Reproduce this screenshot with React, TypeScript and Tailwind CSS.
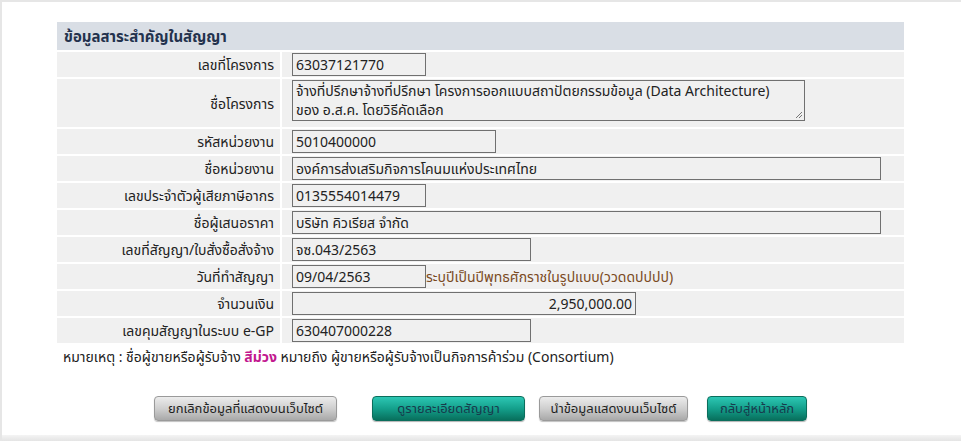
import React from 'react';

type Row = {
  label: string;
  value: React.ReactNode;
  w: string;
  tall?: boolean;
  right?: boolean;
  hint?: string;
};

const rows: Row[] = [
  { label: 'เลขที่โครงการ', value: '63037121770', w: 'w-[134px]' },
  {
    label: 'ชื่อโครงการ',
    value: (
      <>
        จ้างที่ปรึกษาจ้างที่ปรึกษา โครงการออกแบบสถาปัตยกรรมข้อมูล (Data Architecture)
        <br />
        ของ อ.ส.ค. โดยวิธีคัดเลือก
      </>
    ),
    w: 'w-[513px]',
    tall: true,
  },
  { label: 'รหัสหน่วยงาน', value: '5010400000', w: 'w-[204px]' },
  { label: 'ชื่อหน่วยงาน', value: 'องค์การส่งเสริมกิจการโคนมแห่งประเทศไทย', w: 'w-[589px]' },
  { label: 'เลขประจำตัวผู้เสียภาษีอากร', value: '0135554014479', w: 'w-[134px]' },
  { label: 'ชื่อผู้เสนอราคา', value: 'บริษัท คิวเรียส จำกัด', w: 'w-[589px]' },
  { label: 'เลขที่สัญญา/ใบสั่งซื้อสั่งจ้าง', value: 'จซ.043/2563', w: 'w-[239px]' },
  {
    label: 'วันที่ทำสัญญา',
    value: '09/04/2563',
    w: 'w-[134px]',
    hint: 'ระบุปีเป็นปีพุทธศักราชในรูปแบบ(ววดดปปปป)',
  },
  { label: 'จำนวนเงิน', value: '2,950,000.00', w: 'w-[344px]', right: true },
  { label: 'เลขคุมสัญญาในระบบ e-GP', value: '630407000228', w: 'w-[239px]' },
];

const grayBtn =
  'h-[25px] rounded-[4px] border border-[#9a9a9a] bg-gradient-to-b from-[#ececec] via-[#cfcfcf] to-[#a9a9a9] text-[13px] text-[#1e1e1e] shadow-[0_1px_1px_rgba(0,0,0,0.25)]';
const tealBtn =
  'h-[25px] rounded-[4px] border border-[#0b6e5c] bg-gradient-to-b from-[#2cc7b4] via-[#14a08c] to-[#08705d] text-[13px] text-[#173a4c] shadow-[0_1px_1px_rgba(0,0,0,0.3)]';

export default function App() {
  return (
    <div className="relative h-[441px] w-[961px] overflow-hidden border-l-2 border-t-2 border-[#e6e6e6] bg-white font-['Noto_Sans','Noto_Sans_Thai','DejaVu_Sans',sans-serif] text-[14px] text-[#222]">
      <div className="ml-[55px] mt-[20px] w-[847px]">
        <div className="flex h-[28px] items-center bg-[#d9dee5] px-[7px] text-[15px] font-bold text-[#23324d]">
          ข้อมูลสาระสำคัญในสัญญา
        </div>
        <div className="flex flex-col gap-[2px] border-t border-white pt-[1px]">
          {rows.map((r) => (
            <div key={r.label} className="flex bg-[#f0f0f0]">
              <div
                className={`flex w-[225px] shrink-0 items-center justify-end border-r-2 border-white pr-[6px] ${
                  r.tall ? 'h-[48px]' : 'h-[25px]'
                }`}
              >
                {r.label}
              </div>
              <div className={`flex items-center pl-[10px] ${r.tall ? 'h-[48px]' : 'h-[25px]'}`}>
                {r.tall ? (
                  <div className={`relative mt-[-6px] h-[41px] ${r.w} border border-[#707070] bg-[#f0f0f0] px-[3px] leading-[19px]`}>
                    {r.value}
                    <svg className="absolute bottom-[1px] right-[1px]" width="9" height="9" viewBox="0 0 9 9">
                      <path d="M8 2 L2 8 M8 5 L5 8" stroke="#777" strokeWidth="1" />
                    </svg>
                  </div>
                ) : (
                  <div
                    className={`flex h-[23px] ${r.w} items-center border border-[#707070] bg-[#f0f0f0] px-[3px] ${
                      r.right ? 'justify-end' : ''
                    }`}
                  >
                    {r.value}
                  </div>
                )}
                {r.hint && <span className="text-[#7a4a1e]">{r.hint}</span>}
              </div>
            </div>
          ))}
        </div>
        <div className="mt-[4px] pl-[6px] leading-[20px]">
          หมายเหตุ : ชื่อผู้ขายหรือผู้รับจ้าง <span className="font-bold text-[#c2188f]">สีม่วง</span> หมายถึง
          ผู้ขายหรือผู้รับจ้างเป็นกิจการค้าร่วม (Consortium)
        </div>
      </div>

      <div className="ml-[152px] mt-[29px] flex items-center">
        <button className={`${grayBtn} w-[183px]`}>ยกเลิกข้อมูลที่แสดงบนเว็บไซต์</button>
        <button className={`${tealBtn} ml-[35px] w-[153px]`}>ดูรายละเอียดสัญญา</button>
        <button className={`${grayBtn} ml-[14px] w-[149px]`}>นำข้อมูลแสดงบนเว็บไซต์</button>
        <button className={`${tealBtn} ml-[19px] w-[100px]`}>กลับสู่หน้าหลัก</button>
      </div>

      <div className="absolute bottom-0 left-0 h-[6px] w-full bg-gradient-to-b from-[#f4f4f4] to-[#e4e4e4]" />
    </div>
  );
}
